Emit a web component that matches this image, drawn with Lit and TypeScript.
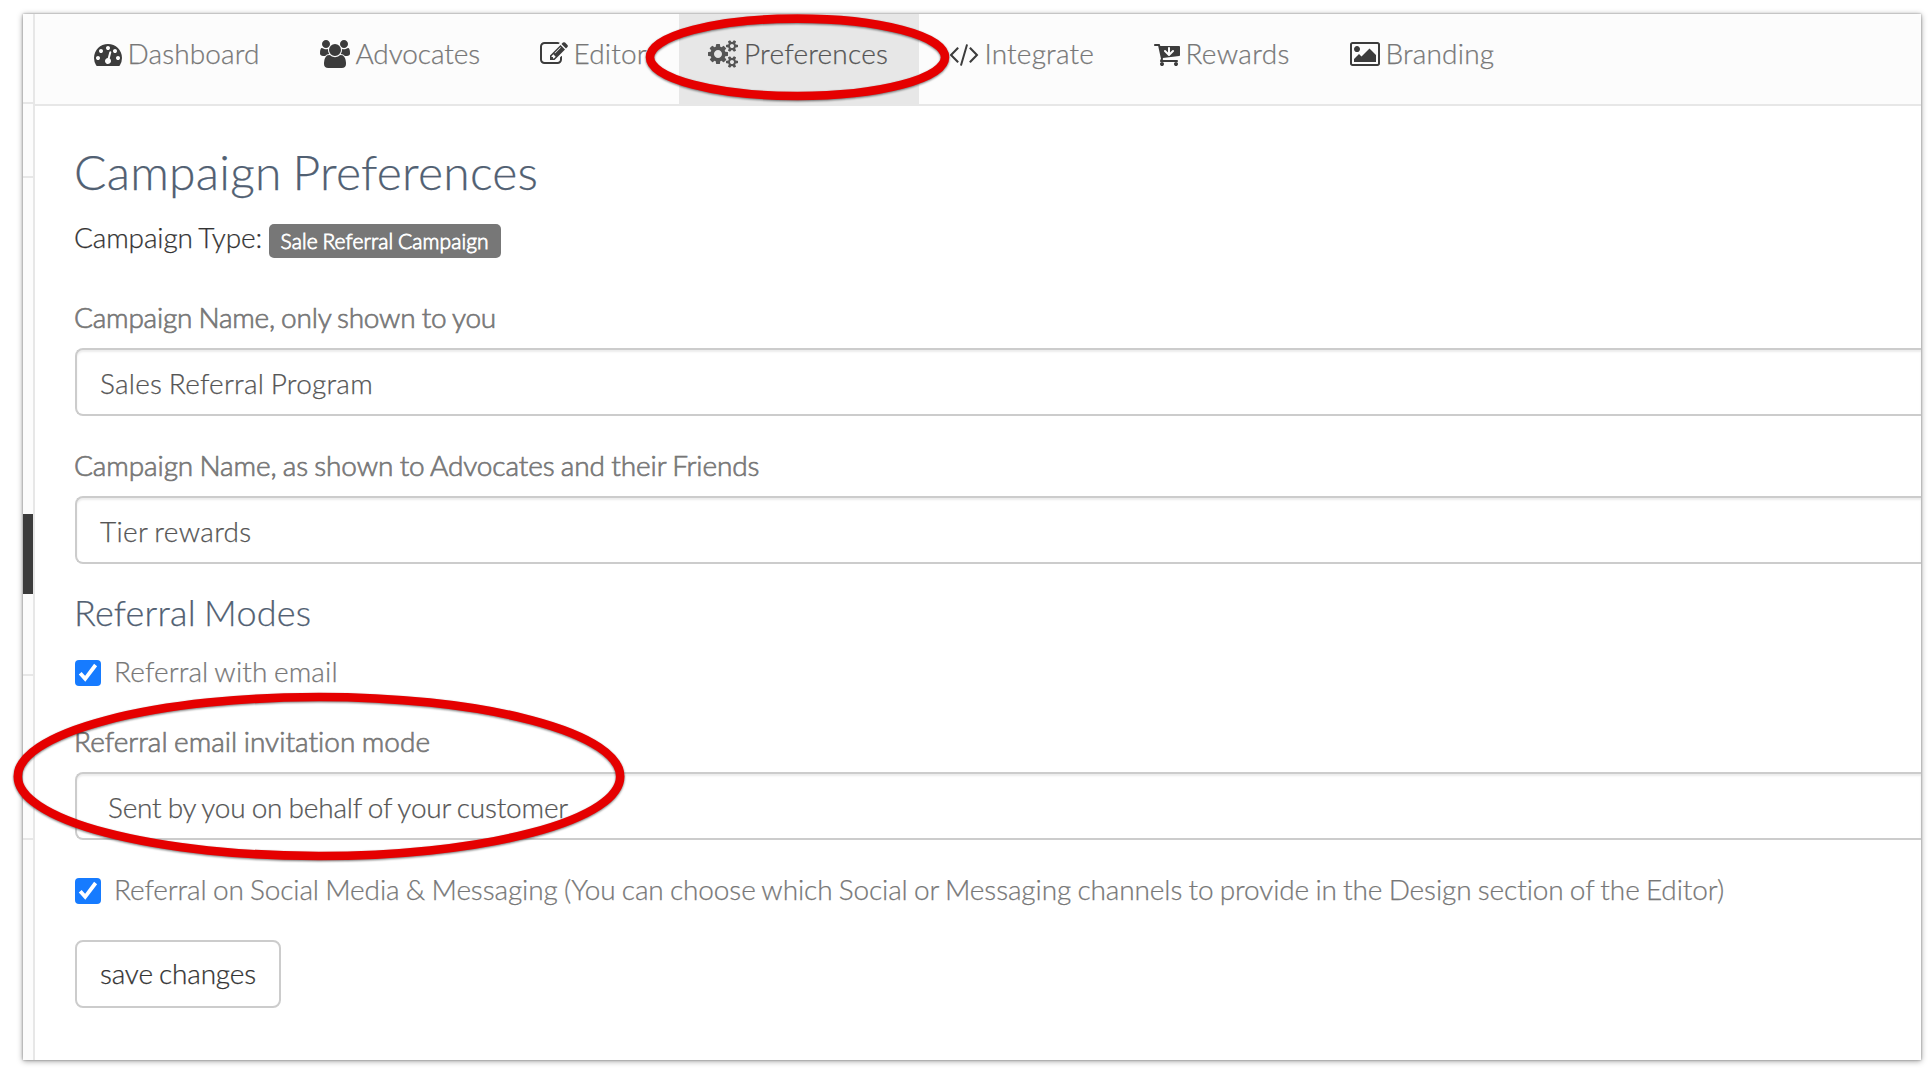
import { LitElement, html, css, svg } from "lit";
import { customElement, property } from "lit/decorators.js";
import { classMap } from "lit/directives/class-map.js";
import { styleMap } from "lit/directives/style-map.js";

interface Glyph {
  width: number;
  path: string;
}

const GLYPHS: Record<string, Glyph> = {
  dashboard: {
    width: 1792,
    path: "M384 1152q0-53-37.5-90.5t-90.5-37.5-90.5 37.5-37.5 90.5 37.5 90.5 90.5 37.5 90.5-37.5 37.5-90.5zm192-448q0-53-37.5-90.5t-90.5-37.5-90.5 37.5-37.5 90.5 37.5 90.5 90.5 37.5 90.5-37.5 37.5-90.5zm428 481l101-382q6-26-7.5-48.5t-38.5-29.5-48 6.5-30 39.5l-101 382q-60 5-107 43.5t-63 98.5q-20 77 20 146t117 89 146-20 89-117q16-60-6-117t-72-91zm660-33q0-53-37.5-90.5t-90.5-37.5-90.5 37.5-37.5 90.5 37.5 90.5 90.5 37.5 90.5-37.5 37.5-90.5zm-640-640q0-53-37.5-90.5t-90.5-37.5-90.5 37.5-37.5 90.5 37.5 90.5 90.5 37.5 90.5-37.5 37.5-90.5zm448 192q0-53-37.5-90.5t-90.5-37.5-90.5 37.5-37.5 90.5 37.5 90.5 90.5 37.5 90.5-37.5 37.5-90.5zm320 448q0 261-141 483-19 29-54 29h-1402q-35 0-54-29-141-221-141-483 0-182 71-348t191-286 286-191 348-71 348 71 286 191 191 286 71 348z",
  },
  users: {
    width: 1920,
    path: "M593 896q-162 5-265 128h-134q-82 0-138-40.5t-56-118.5q0-353 124-353 6 0 43.5 21t97.5 42.5 119 21.5q67 0 133-23-5 37-5 66 0 139 81 256zm1071 637q0 120-73 189.5t-194 69.5h-874q-121 0-194-69.5t-73-189.5q0-53 3.5-103.5t14-109 26.5-108.5 43-97.5 62-81 85.5-53.5 111.5-20q10 0 43 21.5t73 48 107 48 135 21.5 135-21.5 107-48 73-48 43-21.5q61 0 111.5 20t85.5 53.5 62 81 43 97.5 26.5 108.5 14 109 3.5 103.5zm-1024-1277q0 106-75 181t-181 75-181-75-75-181 75-181 181-75 181 75 75 181zm704 384q0 159-112.5 271.5t-271.5 112.5-271.5-112.5-112.5-271.5 112.5-271.5 271.5-112.5 271.5 112.5 112.5 271.5zm576 225q0 78-56 118.5t-138 40.5h-134q-103-123-265-128 81-117 81-256 0-29-5-66 66 23 133 23 59 0 119-21.5t97.5-42.5 43.5-21q124 0 124 353zm-128-609q0 106-75 181t-181 75-181-75-75-181 75-181 181-75 181 75 75 181z",
  },
  edit: {
    width: 1792,
    path: "M888 1184l116-116-152-152-116 116v56h96v96h56zm440-720q-16-16-33 1l-350 350q-17 17-1 33t33-1l350-350q17-17 1-33zm80 594v190q0 119-84.5 203.5t-203.5 84.5h-832q-119 0-203.5-84.5t-84.5-203.5v-832q0-119 84.5-203.5t203.5-84.5h832q63 0 117 25 15 7 18 23 3 17-9 29l-49 49q-14 14-32 8-23-6-45-6h-832q-66 0-113 47t-47 113v832q0 66 47 113t113 47h832q66 0 113-47t47-113v-126q0-13 9-22l64-64q15-15 35-7t20 29zm-96-738l288 288-672 672h-288v-288zm444 132l-92 92-288-288 92-92q28-28 68-28t68 28l152 152q28 28 28 68t-28 68z",
  },
  cogs: {
    width: 1920,
    path: "M896 896q0-106-75-181t-181-75-181 75-75 181 75 181 181 75 181-75 75-181zm768 512q0-52-38-90t-90-38-90 38-38 90q0 53 37.5 90.5t90.5 37.5 90.5-37.5 37.5-90.5zm0-1024q0-52-38-90t-90-38-90 38-38 90q0 53 37.5 90.5t90.5 37.5 90.5-37.5 37.5-90.5zm-384 421v185q0 10-7 19.5t-16 10.5l-155 24q-11 35-32 76 34 48 90 115 7 11 7 20 0 12-7 19-23 30-82.5 89.5t-78.5 59.5q-11 0-21-7l-115-90q-37 19-77 31-11 108-23 155-7 24-30 24h-186q-11 0-20-7.5t-10-17.5l-23-153q-34-10-75-31l-118 89q-7 7-20 7-11 0-21-8-144-133-144-160 0-9 7-19 10-14 41-53t47-61q-23-44-35-82l-152-24q-10-1-17-9.5t-7-19.5v-185q0-10 7-19.5t16-10.5l155-24q11-35 32-76-34-48-90-115-7-11-7-20 0-12 7-20 22-30 82-89t79-59q11 0 21 7l115 90q34-18 77-32 11-108 23-154 7-24 30-24h186q11 0 20 7.5t10 17.5l23 153q34 10 75 31l118-89q8-7 20-7 11 0 21 8 144 133 144 160 0 8-7 19-12 16-42 54t-45 60q23 48 34 82l152 23q10 2 17 10.5t7 19.5zm640 533v140q0 16-149 31-12 27-30 52 51 113 51 138 0 4-4 7-122 71-124 71-8 0-46-47t-52-68q-20 2-30 2t-30-2q-14 21-52 68t-46 47q-2 0-124-71-4-3-4-7 0-25 51-138-18-25-30-52-149-15-149-31v-140q0-16 149-31 13-29 30-52-51-113-51-138 0-4 4-7 4-2 35-20t59-34 30-16q8 0 46 46.5t52 67.5q20-2 30-2t30 2q51-71 92-112l6-2q4 0 124 70 4 3 4 7 0 25-51 138 17 23 30 52 149 15 149 31zm0-1024v140q0 16-149 31-12 27-30 52 51 113 51 138 0 4-4 7-122 71-124 71-8 0-46-47t-52-68q-20 2-30 2t-30-2q-14 21-52 68t-46 47q-2 0-124-71-4-3-4-7 0-25 51-138-18-25-30-52-149-15-149-31v-140q0-16 149-31 13-29 30-52-51-113-51-138 0-4 4-7 4-2 35-20t59-34 30-16q8 0 46 46.5t52 67.5q20-2 30-2t30 2q51-71 92-112l6-2q4 0 124 70 4 3 4 7 0 25-51 138 17 23 30 52 149 15 149 31z",
  },
  code: {
    width: 1920,
    path: "M617 1399l-50 50q-10 10-23 10t-23-10l-466-466q-10-10-10-23t10-23l466-466q10-10 23-10t23 10l50 50q10 10 10 23t-10 23l-393 393 393 393q10 10 10 23t-10 23zm591-1067l-373 1291q-4 13-15.5 19.5t-23.5 2.5l-62-17q-13-4-19.5-15.5t-2.5-24.5l373-1291q4-13 15.5-19.5t23.5-2.5l62 17q13 4 19.5 15.5t2.5 24.5zm657 651l-466 466q-10 10-23 10t-23-10l-50-50q-10-10-10-23t10-23l393-393-393-393q-10-10-10-23t10-23l50-50q10-10 23-10t23 10l466 466q10 10 10 23t-10 23z",
  },
  cart: {
    width: 1664,
    path: "M1280 704q0-27-18.5-45.5t-45.5-18.5q-26 0-45 19l-147 146v-293q0-26-19-45t-45-19-45 19-19 45v293l-147-146q-19-19-45-19-27 0-45.5 18.5t-18.5 45.5q0 26 19 45l256 256q19 19 45 19t45-19l256-256q19-19 19-45zM640 1536q0 52-38 90t-90 38-90-38-38-90 38-90 90-38 90 38 38 90zm896 0q0 52-38 90t-90 38-90-38-38-90 38-90 90-38 90 38 38 90zm128-1088v512q0 24-16.5 42.5t-40.5 21.5l-1044 122q13 60 13 70 0 16-24 64h920q26 0 45 19t19 45-19 45-45 19h-1024q-26 0-45-19t-19-45q0-11 8-31.5t16-36 21.5-40 15.5-29.5l-177-823h-204q-26 0-45-19t-19-45 19-45 45-19h256q16 0 28.5 6.5t19.5 15.5 13 24.5 8 26 5.5 29.5 4.5 26h1201q26 0 45 19t19 45z",
  },
  picture: {
    width: 1920,
    path: "M640 576q0 80-56 136t-136 56-136-56-56-136 56-136 136-56 136 56 56 136zm1024 384v448h-1408v-192l320-320 160 160 512-512zm96-704h-1600q-13 0-22.5 9.5t-9.5 22.5v1216q0 13 9.5 22.5t22.5 9.5h1600q13 0 22.5-9.5t9.5-22.5v-1216q0-13-9.5-22.5t-22.5-9.5zm160 32v1216q0 66-47 113t-113 47h-1600q-66 0-113-47t-47-113v-1216q0-66 47-113t113-47h1600q66 0 113 47t47 113z",
  },
};

/* A text run whose tracking, in pixels, is supplied by its owner. */
const run = (text: string, tracking: number) =>
  html`<span style=${styleMap({ letterSpacing: `${tracking}px` })}>${text}</span>`;

@customElement("nav-icon")
class NavIcon extends LitElement {
  static styles = css`
    :host { display: block; flex: none; }
    svg { display: block; height: 28px; fill: currentColor; fill-rule: evenodd; overflow: visible; }
  `;
  @property() name = "dashboard";
  render() {
    const g = GLYPHS[this.name];
    return html`<svg width=${g.width / 64} viewBox="0 0 ${g.width} 1792">${svg`<path d=${g.path}></path>`}</svg>`;
  }
}

@customElement("check-row")
class CheckRow extends LitElement {
  static styles = css`
    :host { display: flex; gap: 13px; height: 40px; line-height: 40px; color: #777; }
    .box { width: 26px; height: 26px; margin-top: 9px; border-radius: 4px; background: #167bff; flex: none; }
    svg { display: block; fill: none; stroke: #fff; stroke-width: 3.8; }
    .text { white-space: nowrap; }
  `;
  @property() label = "";
  @property({ type: Number }) tracking = 0;
  render() {
    return html`
      <div class="box"><svg width="26" height="26" viewBox="0 0 26 26"><path d="M5.2 13.2 L10.2 18.8 L20.6 5"></path></svg></div>
      <div class="text">${run(this.label, this.tracking)}</div>
    `;
  }
}

@customElement("text-field")
class TextField extends LitElement {
  static styles = css`
    :host { display: block; }
    .label { height: 40px; line-height: 38px; margin: 0 0 10px -1px; color: #777; -webkit-text-stroke: 0.7px #777; white-space: nowrap; }
    .control {
      box-sizing: border-box; height: 68px; padding: 13px 24px 0 23px; line-height: 40px;
      border: 2px solid #ccc; border-right: 0; border-radius: 8px 0 0 8px; background: #fff;
      box-shadow: inset 0 2px 2px rgba(0, 0, 0, 0.075); color: #555; white-space: nowrap;
    }
    .select { padding-left: 31px; }
  `;
  @property() label = "";
  @property() value = "";
  @property({ type: Number }) labelTracking = 0;
  @property({ type: Number }) valueTracking = 0;
  @property({ type: Boolean }) select = false;
  render() {
    return html`
      <div class="label">${run(this.label, this.labelTracking)}</div>
      <div class=${classMap({ control: true, select: this.select })}>${run(this.value, this.valueTracking)}</div>
    `;
  }
}

const TABS = [
  { icon: "dashboard", text: "Dashboard", tracking: 0.15, width: 226 },
  { icon: "users", text: "Advocates", tracking: -0.08, width: 220 },
  { icon: "edit", text: "Editor", tracking: 0.2, width: 169 },
  { icon: "cogs", text: "Preferences", tracking: 0.22, width: 240, active: true },
  { icon: "code", text: "Integrate", tracking: 0.2, width: 205 },
  { icon: "cart", text: "Rewards", tracking: 0.35, width: 196 },
  { icon: "picture", text: "Branding", tracking: 0.2, width: 206 },
];

@customElement("app-root")
class AppRoot extends LitElement {
  static styles = css`
    :host {
      display: block; position: relative; box-sizing: border-box; width: 1931px; height: 1070px;
      padding: 14px 10px 10px 23px; overflow: hidden; background: #fff;
      font-family: Lato, "Liberation Sans", sans-serif; font-size: 28px; font-weight: 300; word-spacing: -1.2px;
      -webkit-text-stroke: 0.25px currentColor;
    }
    .window { display: flex; height: 1046px; background: #fff; box-shadow: 0 0 2px rgba(0, 0, 0, 0.35), 0 1px 6px rgba(0, 0, 0, 0.4); }
    .rail { display: flex; flex-direction: column; box-sizing: border-box; width: 12px; border-right: 2px solid #e7e7e7; background: #fcfcfc; flex: none; }
    .seg { box-sizing: border-box; border-bottom: 2px solid #e7e7e7; flex: none; }
    .seg-brand { height: 90px; }
    .seg-search { height: 74px; }
    .seg-menu { height: 336px; border: 0; }
    .seg-current { height: 80px; border: 0; background: #3c3c3c; }
    .seg-next { height: 82px; }
    .seg-last { height: 164px; }
    .main { flex: 1; min-width: 0; }
    .tabs { display: flex; box-sizing: border-box; height: 92px; padding-left: 29px; border-bottom: 2px solid #e7e7e7; background: #fcfcfc; }
    .tab { display: flex; gap: 5.4px; box-sizing: border-box; height: 92px; padding: 19px 0 0 30px; line-height: 40px; color: #777; flex: none; white-space: nowrap; }
    .tab nav-icon { margin-top: 7px; color: #3c3c3c; }
    .active { padding-left: 29px; gap: 6px; background: #e7e7e7; color: #555; }
    .active nav-icon { color: #555; }
    .content { padding: 39px 0 0 40px; }
    h1 { margin: 0 0 19px -1px; font-size: 48px; line-height: 53px; font-weight: 300; color: #516072; word-spacing: -2.4px; white-space: nowrap; }
    h2 { margin: 28px 0 19px -1px; font-size: 36px; line-height: 40px; font-weight: 300; color: #516072; word-spacing: -1.8px; white-space: nowrap; }
    .type { display: flex; gap: 6.5px; height: 40px; line-height: 40px; margin: 0 0 41px -1px; color: #333; white-space: nowrap; }
    .badge { box-sizing: border-box; width: 232px; height: 34px; margin-top: 7px; padding-left: 12px; border-radius: 5px; background: #777; color: #fff; font-size: 21px; line-height: 33px; word-spacing: -1.2px; -webkit-text-stroke: 0.8px #fff; }
    .names { display: flex; flex-direction: column; gap: 30px; }
    .invite { margin: 31px 0 29px; }
    .save { display: flex; box-sizing: border-box; width: 206px; height: 68px; margin: 31px 0 0; padding: 0 0 3px 23px; align-items: center; border: 2px solid #ccc; border-radius: 8px; background: #fff; color: #333; font: inherit; line-height: 40px; text-align: left; word-spacing: inherit; }
    .marks { position: absolute; left: 0; top: 0; pointer-events: none; }
    .marks ellipse { fill: none; stroke: #e50000; stroke-width: 8.6; filter: drop-shadow(0 1px 1px rgba(0, 0, 0, 0.55)); }
  `;
  render() {
    return html`
      <div class="window">
        <div class="rail">
          <div class="seg seg-brand"></div>
          <div class="seg seg-search"></div>
          <div class="seg seg-menu"></div>
          <div class="seg seg-current"></div>
          <div class="seg seg-next"></div>
          <div class="seg seg-last"></div>
        </div>
        <div class="main">
          <nav class="tabs">
            ${TABS.map(
              (t) => html`<div class=${classMap({ tab: true, active: !!t.active })} style=${styleMap({ width: `${t.width}px` })}>
                <nav-icon name=${t.icon}></nav-icon>${run(t.text, t.tracking)}
              </div>`
            )}
          </nav>
          <div class="content">
            <h1>${run("Campaign Preferences", 0.26)}</h1>
            <div class="type">${run("Campaign Type:", -0.14)}<div class="badge">${run("Sale Referral Campaign", 0.1)}</div></div>
            <div class="names">
              <text-field label="Campaign Name, only shown to you" value="Sales Referral Program" .labelTracking=${-0.21} .valueTracking=${0.23}></text-field>
              <text-field label="Campaign Name, as shown to Advocates and their Friends" value="Tier rewards" .labelTracking=${-0.1} .valueTracking=${0.33}></text-field>
            </div>
            <h2>${run("Referral Modes", 0.22)}</h2>
            <check-row label="Referral with email" .tracking=${0.12}></check-row>
            <text-field class="invite" select label="Referral email invitation mode" value="Sent by you on behalf of your customer" .labelTracking=${0.02} .valueTracking=${-0.19}></text-field>
            <check-row label="Referral on Social Media &amp; Messaging (You can choose which Social or Messaging channels to provide in the Design section of the Editor)" .tracking=${-0.11}></check-row>
            <button class="save">${run("save changes", -0.18)}</button>
          </div>
        </div>
      </div>
      <svg class="marks" width="1931" height="1070" viewBox="0 0 1931 1070">
        <ellipse cx="797.5" cy="57.3" rx="147.5" ry="38.7"></ellipse>
        <ellipse cx="319" cy="776.5" rx="301.2" ry="79.5"></ellipse>
      </svg>
    `;
  }
}
